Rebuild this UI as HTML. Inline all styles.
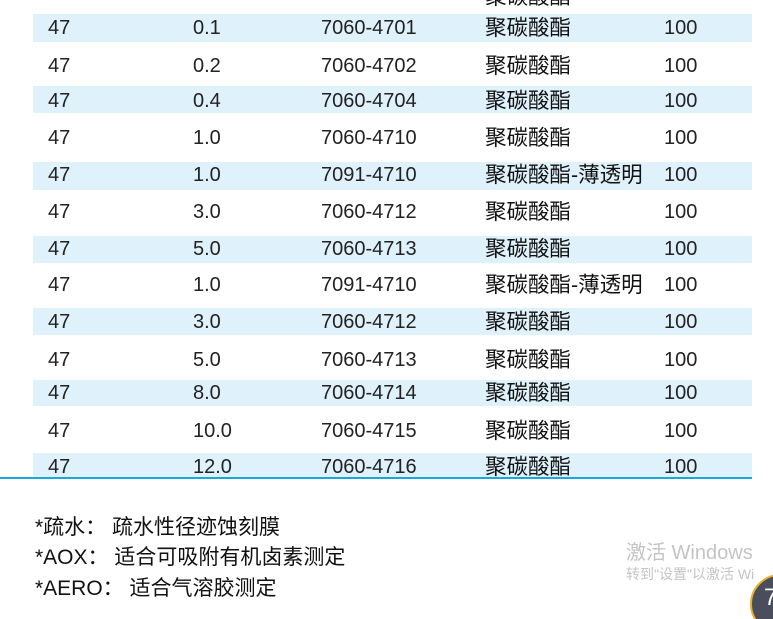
<!DOCTYPE html>
<html><head><meta charset="utf-8"><style>
html,body{margin:0;width:773px;height:619px;overflow:hidden;}
body{background:#fff;position:relative;font-family:"Liberation Sans","Noto Sans CJK SC",sans-serif;color:#222;}
.b{position:absolute;left:33px;width:719px;background:#dff1fb;}
.t{position:absolute;font-size:20px;line-height:20px;white-space:nowrap;}
.c{position:absolute;font-size:21.5px;line-height:22px;white-space:nowrap;color:#111;}
.f{position:absolute;left:35px;font-size:21px;line-height:24px;white-space:nowrap;color:#111;}
</style></head><body>
<div class="b" style="top:14px;height:28px"></div>
<div class="b" style="top:86px;height:27px"></div>
<div class="b" style="top:162px;height:28px"></div>
<div class="b" style="top:236px;height:27px"></div>
<div class="b" style="top:308px;height:27px"></div>
<div class="b" style="top:380px;height:26px"></div>
<div class="b" style="top:453px;height:25px"></div>
<div style="position:absolute;left:0;top:477px;width:752px;height:2px;background:#1aa7e0"></div>
<div class="c" style="left:485px;top:-14px">聚碳酸酯</div>
<script>
var rows=[[28,"0.1","7060-4701","聚碳酸酯"],[66,"0.2","7060-4702","聚碳酸酯"],[101,"0.4","7060-4704","聚碳酸酯"],[138,"1.0","7060-4710","聚碳酸酯"],[175,"1.0","7091-4710","聚碳酸酯-薄透明"],[212,"3.0","7060-4712","聚碳酸酯"],[249,"5.0","7060-4713","聚碳酸酯"],[285,"1.0","7091-4710","聚碳酸酯-薄透明"],[322,"3.0","7060-4712","聚碳酸酯"],[360,"5.0","7060-4713","聚碳酸酯"],[393,"8.0","7060-4714","聚碳酸酯"],[431,"10.0","7060-4715","聚碳酸酯"],[467,"12.0","7060-4716","聚碳酸酯"]];
rows.forEach(function(r){var y=r[0]-10;
document.write('<div class="t" style="left:48px;top:'+y+'px">47</div><div class="t" style="left:193px;top:'+y+'px">'+r[1]+'</div><div class="t" style="left:321px;top:'+y+'px">'+r[2]+'</div><div class="c" style="left:485px;top:'+(y-1)+'px">'+r[3]+'</div><div class="t" style="left:664px;top:'+y+'px">100</div>');});
</script>
<div class="f" style="top:516px">*疏水：&nbsp;疏水性径迹蚀刻膜</div>
<div class="f" style="top:546px">*AOX：&nbsp;适合可吸附有机卤素测定</div>
<div class="f" style="top:577px">*AERO：&nbsp;适合气溶胶测定</div>
<div style="position:absolute;left:626px;top:536px;font-size:20px;color:#c4c4c4;white-space:nowrap">激活 Windows</div>
<div style="position:absolute;left:626px;top:564px;font-size:14px;color:#c4c4c4;white-space:nowrap">转到"设置"以激活 Wi</div>
<div style="position:absolute;left:750px;top:574px;width:56px;height:56px;border-radius:50%;background:#4a4e5c;border:2px solid #e8b030;color:#fff;font-size:24px;line-height:44px;text-indent:12px">7</div>
</body></html>
